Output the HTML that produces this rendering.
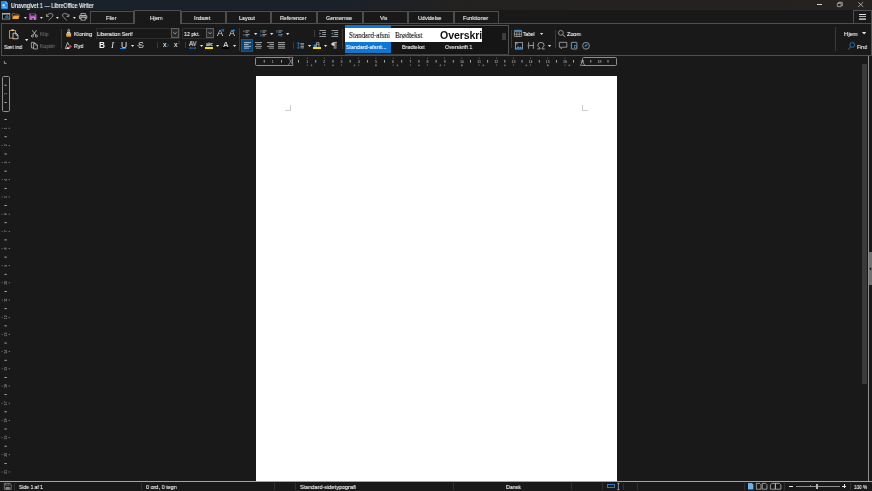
<!DOCTYPE html>
<html><head><meta charset="utf-8"><title>Unavngivet 1 — LibreOffice Writer</title>
<style>
html,body{margin:0;padding:0;width:872px;height:491px;overflow:hidden;background:#191919;}
body{position:relative;font-family:"Liberation Sans",sans-serif;}
.a{position:absolute;display:block;}
.t{white-space:nowrap;will-change:transform;}
svg{overflow:visible;}
</style></head><body>
<div class="a" style="left:0.00px;top:0.00px;width:872.00px;height:10.20px;background:linear-gradient(90deg,#19212b 0%,#1b2129 38%,#1f2125 46%,#232120 53%,#262220 100%);"></div>
<svg class="a" style="left:1.00px;top:0.90px;" width="7" height="8" viewBox="0 0 7 8"><path d="M1 0H4.6L7 2.4V7.2Q7 8 6.2 8H0.8Q0 8 0 7.2V0.8Q0 0 1 0Z" fill="#1e8fe6"/><path d="M4.6 0L7 2.4H4.6Z" fill="#8fd0ff"/><rect x="1.5" y="3.3" width="2.2" height="1.8" fill="#dff0ff"/><rect x="1.5" y="5.8" width="3.8" height="0.6" fill="#dff0ff"/></svg>
<span class="a t" style="left:10.90px;top:1.81px;font-size:6.49px;line-height:7.78px;color:#ffffff;font-family:'Liberation Sans',sans-serif;transform:scaleX(0.8415);transform-origin:0 50%;-webkit-text-stroke:0.12px #ffffff;">Unavngivet 1 — LibreOffice Writer</span>
<div class="a" style="left:816.70px;top:4.30px;width:5.10px;height:0.50px;background:#d0d0d0;"></div>
<svg class="a" style="left:836.60px;top:2.20px;" width="5.8" height="5" viewBox="0 0 5.8 5"><rect x="0.3" y="1.3" width="3.8" height="3.3" fill="none" stroke="#e8e8e8" stroke-width="0.6" rx="0.5"/><path d="M1.5 1.2V0.3H5.3V3.8H4.3" fill="none" stroke="#e8e8e8" stroke-width="0.6"/></svg>
<svg class="a" style="left:858.00px;top:2.10px;" width="5.4" height="5" viewBox="0 0 5.4 5"><path d="M0.2 0.2L5.2 4.8M5.2 0.2L0.2 4.8" stroke="#ececec" stroke-width="0.6"/></svg>
<div class="a" style="left:0.00px;top:10.20px;width:872.00px;height:481.00px;background:#191919;"></div>
<div class="a" style="left:0.60px;top:23.15px;width:871.40px;height:32.70px;border:0.8px solid #4e4e4e;box-sizing:border-box;"></div>
<div class="a" style="left:89.50px;top:11.00px;width:44.90px;height:12.90px;border:0.8px solid #4e4e4e;box-sizing:border-box;"></div>
<span class="a t" style="left:105.56px;top:15.10px;font-size:6.00px;line-height:7.19px;color:#f0f0f0;font-family:'Liberation Sans',sans-serif;transform:scaleX(0.8899);transform-origin:0 50%;-webkit-text-stroke:0.12px #f0f0f0;">Filer</span>
<div class="a" style="left:134.00px;top:10.00px;width:47.10px;height:14.10px;background:#191919;border:0.8px solid #4e4e4e;box-sizing:border-box;border-bottom:none;"></div>
<span class="a t" style="left:150.08px;top:15.10px;font-size:6.00px;line-height:7.19px;color:#f0f0f0;font-family:'Liberation Sans',sans-serif;transform:scaleX(0.8899);transform-origin:0 50%;-webkit-text-stroke:0.12px #f0f0f0;">Hjem</span>
<div class="a" style="left:180.60px;top:11.00px;width:45.20px;height:12.90px;border:0.8px solid #4e4e4e;box-sizing:border-box;"></div>
<span class="a t" style="left:193.85px;top:15.10px;font-size:6.00px;line-height:7.19px;color:#f0f0f0;font-family:'Liberation Sans',sans-serif;transform:scaleX(0.8899);transform-origin:0 50%;-webkit-text-stroke:0.12px #f0f0f0;">Indsæt</span>
<div class="a" style="left:225.80px;top:11.00px;width:45.60px;height:12.90px;border:0.8px solid #4e4e4e;box-sizing:border-box;"></div>
<span class="a t" style="left:239.39px;top:15.10px;font-size:6.00px;line-height:7.19px;color:#f0f0f0;font-family:'Liberation Sans',sans-serif;transform:scaleX(0.8899);transform-origin:0 50%;-webkit-text-stroke:0.12px #f0f0f0;">Layout</span>
<div class="a" style="left:271.40px;top:11.00px;width:45.60px;height:12.90px;border:0.8px solid #4e4e4e;box-sizing:border-box;"></div>
<span class="a t" style="left:279.80px;top:15.10px;font-size:6.00px;line-height:7.19px;color:#f0f0f0;font-family:'Liberation Sans',sans-serif;transform:scaleX(0.8899);transform-origin:0 50%;-webkit-text-stroke:0.12px #f0f0f0;">Referencer</span>
<div class="a" style="left:317.00px;top:11.00px;width:45.50px;height:12.90px;border:0.8px solid #4e4e4e;box-sizing:border-box;"></div>
<span class="a t" style="left:325.50px;top:15.10px;font-size:6.00px;line-height:7.19px;color:#f0f0f0;font-family:'Liberation Sans',sans-serif;transform:scaleX(0.8899);transform-origin:0 50%;-webkit-text-stroke:0.12px #f0f0f0;">Gennemse</span>
<div class="a" style="left:362.50px;top:11.00px;width:45.50px;height:12.90px;border:0.8px solid #4e4e4e;box-sizing:border-box;"></div>
<span class="a t" style="left:380.39px;top:15.10px;font-size:6.00px;line-height:7.19px;color:#f0f0f0;font-family:'Liberation Sans',sans-serif;transform:scaleX(0.8899);transform-origin:0 50%;-webkit-text-stroke:0.12px #f0f0f0;">Vis</span>
<div class="a" style="left:408.00px;top:11.00px;width:45.50px;height:12.90px;border:0.8px solid #4e4e4e;box-sizing:border-box;"></div>
<span class="a t" style="left:417.84px;top:15.10px;font-size:6.00px;line-height:7.19px;color:#f0f0f0;font-family:'Liberation Sans',sans-serif;transform:scaleX(0.8899);transform-origin:0 50%;-webkit-text-stroke:0.12px #f0f0f0;">Udvidelse</span>
<div class="a" style="left:453.50px;top:11.00px;width:45.70px;height:12.90px;border:0.8px solid #4e4e4e;box-sizing:border-box;"></div>
<span class="a t" style="left:462.55px;top:15.10px;font-size:6.00px;line-height:7.19px;color:#f0f0f0;font-family:'Liberation Sans',sans-serif;transform:scaleX(0.8899);transform-origin:0 50%;-webkit-text-stroke:0.12px #f0f0f0;">Funktioner</span>
<div class="a" style="left:853.20px;top:10.20px;width:18.80px;height:13.40px;border:0.8px solid #4e4e4e;box-sizing:border-box;"></div>
<div class="a" style="left:859.00px;top:14.00px;width:7.20px;height:1.00px;background:#e4e4e4;"></div>
<div class="a" style="left:859.00px;top:16.00px;width:7.20px;height:1.00px;background:#b4b4b4;"></div>
<div class="a" style="left:859.00px;top:18.00px;width:7.20px;height:1.00px;background:#8a8a8a;"></div>
<div class="a" style="left:859.00px;top:19.00px;width:7.20px;height:1.00px;background:#b0b0b0;"></div>
<svg class="a" style="left:1.90px;top:13.20px;" width="8.2" height="6.4" viewBox="0 0 8.2 6.4"><rect x="0.35" y="0.35" width="7.5" height="5.7" fill="#121518" stroke="#b4b4b4" stroke-width="0.7"/><rect x="0.35" y="0.2" width="7.5" height="1.3" fill="#b4b4b4"/><path d="M3.2 3.3H6.6V4.9H3.2Z" fill="#1f7fd0"/><path d="M4.4 1.6H5.6V3.4H4.4Z" fill="#1f7fd0"/></svg>
<svg class="a" style="left:12.40px;top:13.30px;" width="7.8" height="6.2" viewBox="0 0 7.8 6.2"><path d="M0.4 5.6V0.9Q0.4 0.4 0.9 0.4H2.6L3.4 1.3H6.2Q6.7 1.3 6.7 1.8V2.6" fill="none" stroke="#b98a45" stroke-width="0.6"/><path d="M1.5 2.5H7.6L6.5 5.9H0.4Z" fill="#f4a23c"/></svg>
<svg class="a" style="left:23.60px;top:17.05px;" width="2.8" height="1.9" viewBox="0 0 2.8 1.9"><path d="M0 0H2.8L1.4 1.9Z" fill="#e8e8e8"/></svg>
<svg class="a" style="left:29.00px;top:13.20px;" width="7.8" height="7.2" viewBox="0 0 7.8 7.2"><path d="M0.3 0.9Q0.3 0.3 0.9 0.3H6.1L7.5 1.7V6.3Q7.5 6.9 6.9 6.9H0.9Q0.3 6.9 0.3 6.3Z" fill="#b04fc0"/><rect x="1.8" y="0.5" width="4" height="2.0" fill="#241a28"/><rect x="1.5" y="4.0" width="4.8" height="2.9" fill="#cf82dc"/><rect x="2.6" y="5.0" width="2.4" height="1.9" fill="#1c2a1c" opacity="0.75"/></svg>
<svg class="a" style="left:39.90px;top:17.05px;" width="2.8" height="1.9" viewBox="0 0 2.8 1.9"><path d="M0 0H2.8L1.4 1.9Z" fill="#e8e8e8"/></svg>
<svg class="a" style="left:45.60px;top:13.00px;" width="7.4" height="7.6" viewBox="0 0 7.4 7.6"><path d="M0.6 3.2Q2.0 0.2 4.9 0.4Q7.6 0.9 6.9 3.0Q6.4 4.0 2.6 7.3" fill="none" stroke="#c4c4c4" stroke-width="0.65"/><path d="M0.5 1.0V3.5H2.9" fill="none" stroke="#c4c4c4" stroke-width="0.65"/></svg>
<svg class="a" style="left:56.10px;top:17.05px;" width="2.8" height="1.9" viewBox="0 0 2.8 1.9"><path d="M0 0H2.8L1.4 1.9Z" fill="#e8e8e8"/></svg>
<svg class="a" style="left:61.70px;top:13.00px;" width="7.4" height="7.6" viewBox="0 0 7.4 7.6"><path d="M6.8 3.2Q5.4 0.2 2.5 0.4Q-0.2 0.9 0.5 3.0Q1.0 4.0 4.8 7.3" fill="none" stroke="#c4c4c4" stroke-width="0.65"/><path d="M6.9 1.0V3.5H4.5" fill="none" stroke="#c4c4c4" stroke-width="0.65"/></svg>
<svg class="a" style="left:72.80px;top:17.05px;" width="2.8" height="1.9" viewBox="0 0 2.8 1.9"><path d="M0 0H2.8L1.4 1.9Z" fill="#e8e8e8"/></svg>
<svg class="a" style="left:78.90px;top:13.00px;" width="8.2" height="7.4" viewBox="0 0 8.2 7.4"><rect x="2.0" y="0.35" width="4.2" height="2.0" fill="none" stroke="#c8c8c8" stroke-width="0.7"/><path d="M1.9 5.6H0.8Q0.35 5.6 0.35 5.2V2.9Q0.35 2.5 0.8 2.5H7.4Q7.85 2.5 7.85 2.9V5.2Q7.85 5.6 7.4 5.6H6.3" fill="#6a6a6a" stroke="#c8c8c8" stroke-width="0.75"/><rect x="2.0" y="4.3" width="4.2" height="2.8" fill="#191919" stroke="#c8c8c8" stroke-width="0.7"/></svg>
<svg class="a" style="left:9.20px;top:29.30px;" width="9.4" height="10.2" viewBox="0 0 9.4 10.2"><path d="M0.5 1.5H6.6V9.2H0.5Z" fill="none" stroke="#d9a04a" stroke-width="0.9"/><rect x="2.4" y="0.3" width="2.4" height="1.6" fill="#c8c8c8"/><path d="M4.0 4.2H7.2L9.0 6V9.8H4.0Z" fill="#191919" stroke="#e2e2e2" stroke-width="0.8"/><path d="M7.0 4.2V6.2H9.0" fill="none" stroke="#e2e2e2" stroke-width="0.7"/></svg>
<span class="a t" style="left:3.70px;top:42.74px;font-size:6.10px;line-height:7.32px;color:#f2f2f2;font-family:'Liberation Sans',sans-serif;transform:scaleX(0.8699);transform-origin:0 50%;-webkit-text-stroke:0.12px #f2f2f2;">Sæt ind</span>
<svg class="a" style="left:25.20px;top:39.00px;" width="3.4" height="2.2" viewBox="0 0 3.4 2.2"><path d="M0 0H3.4L1.7 2.2Z" fill="#e8e8e8"/></svg>
<svg class="a" style="left:31.20px;top:29.70px;" width="6.8" height="7.4" viewBox="0 0 6.8 7.4"><path d="M1.2 0.2L4.9 5.3M5.6 0.2L1.9 5.3" stroke="#d0d0d0" stroke-width="0.75" fill="none"/><circle cx="1.4" cy="6.0" r="1.05" fill="none" stroke="#d0d0d0" stroke-width="0.7"/><circle cx="5.4" cy="6.0" r="1.05" fill="none" stroke="#d0d0d0" stroke-width="0.7"/></svg>
<span class="a t" style="left:40.00px;top:30.24px;font-size:6.10px;line-height:7.32px;color:#6b6b6b;font-family:'Liberation Sans',sans-serif;transform:scaleX(0.8351);transform-origin:0 50%;-webkit-text-stroke:0.12px #6b6b6b;">Klip</span>
<svg class="a" style="left:31.20px;top:41.50px;" width="6.8" height="7.4" viewBox="0 0 6.8 7.4"><path d="M0.4 0.4H3.4V6.0H0.4Z" fill="none" stroke="#cfcfcf" stroke-width="0.7"/><path d="M2.6 1.5H4.8L6.4 3.1V7.0H2.6Z" fill="#191919" stroke="#cfcfcf" stroke-width="0.7"/><path d="M4.7 1.5V3.2H6.4" fill="none" stroke="#cfcfcf" stroke-width="0.6"/></svg>
<span class="a t" style="left:40.00px;top:42.24px;font-size:6.10px;line-height:7.32px;color:#6b6b6b;font-family:'Liberation Sans',sans-serif;transform:scaleX(0.8501);transform-origin:0 50%;-webkit-text-stroke:0.12px #6b6b6b;">Kopiér</span>
<div class="a" style="left:61.10px;top:29.40px;width:0.70px;height:19.40px;background:#3a3a3a;"></div>
<svg class="a" style="left:65.80px;top:29.00px;" width="5.4" height="8.0" viewBox="0 0 5.4 8.0"><path d="M2.0 2.6V1.0Q2.0 0.3 2.7 0.3Q3.4 0.3 3.4 1.0V2.6" fill="none" stroke="#d8d8d8" stroke-width="0.7"/><path d="M0.8 4.6Q0.8 2.6 2.7 2.6Q4.6 2.6 4.6 4.6Z" fill="#d8d8d8"/><rect x="0.3" y="4.6" width="4.8" height="3.1" fill="#e0a040"/><rect x="0.3" y="4.6" width="4.8" height="0.8" fill="#f3d9a6"/></svg>
<span class="a t" style="left:74.00px;top:30.24px;font-size:6.10px;line-height:7.32px;color:#f2f2f2;font-family:'Liberation Sans',sans-serif;transform:scaleX(0.8987);transform-origin:0 50%;-webkit-text-stroke:0.12px #f2f2f2;">Kloning</span>
<svg class="a" style="left:65.00px;top:41.80px;" width="7.4" height="7.2" viewBox="0 0 7.4 7.2"><path d="M2.6 0.4L0.4 6.6H1.6M2.6 0.4L4.2 3.6" fill="none" stroke="#d8d8d8" stroke-width="0.75"/><path d="M3.2 5.0L5.6 3.0L7.0 4.6L4.6 6.7Z" fill="#e8423a"/><path d="M1.8 5.6L3.2 5.0L4.6 6.7L3.6 6.9H1.6Z" fill="#e8e8e8"/></svg>
<span class="a t" style="left:74.00px;top:42.24px;font-size:6.10px;line-height:7.32px;color:#f2f2f2;font-family:'Liberation Sans',sans-serif;transform:scaleX(0.8475);transform-origin:0 50%;-webkit-text-stroke:0.12px #f2f2f2;">Ryd</span>
<div class="a" style="left:96.00px;top:27.90px;width:83.60px;height:10.70px;background:#191919;border:0.8px solid #2e2e2e;box-sizing:border-box;"></div>
<span class="a t" style="left:97.40px;top:29.94px;font-size:6.10px;line-height:7.32px;color:#f2f2f2;font-family:'Liberation Sans',sans-serif;transform:scaleX(0.8671);transform-origin:0 50%;-webkit-text-stroke:0.12px #f2f2f2;">Liberation Serif</span>
<div class="a" style="left:171.00px;top:28.20px;width:8.40px;height:10.10px;background:#2a2a2a;border:0.8px solid #606060;box-sizing:border-box;"></div>
<svg class="a" style="left:173.30px;top:32.40px;" width="4" height="2.4" viewBox="0 0 4 2.4"><path d="M0.3 0.3L2 1.9L3.7 0.3" fill="none" stroke="#dcdcdc" stroke-width="0.6"/></svg>
<div class="a" style="left:181.90px;top:27.90px;width:32.30px;height:10.70px;background:#191919;border:0.8px solid #2e2e2e;box-sizing:border-box;"></div>
<span class="a t" style="left:183.50px;top:29.94px;font-size:6.10px;line-height:7.32px;color:#f2f2f2;font-family:'Liberation Sans',sans-serif;transform:scaleX(0.8568);transform-origin:0 50%;-webkit-text-stroke:0.12px #f2f2f2;">12 pkt.</span>
<div class="a" style="left:205.80px;top:28.20px;width:8.20px;height:10.10px;background:#2a2a2a;border:0.8px solid #606060;box-sizing:border-box;"></div>
<svg class="a" style="left:208.00px;top:32.40px;" width="4" height="2.4" viewBox="0 0 4 2.4"><path d="M0.3 0.3L2 1.9L3.7 0.3" fill="none" stroke="#dcdcdc" stroke-width="0.6"/></svg>
<span class="a t" style="left:216.80px;top:27.64px;font-size:9.27px;line-height:11.12px;color:#d6d6d6;font-family:'Liberation Sans',sans-serif;">A</span>
<svg class="a" style="left:221.30px;top:29.40px;" width="2.6" height="2.6" viewBox="0 0 2.6 2.6"><path d="M0.2 0.6H2.6V2.8M2.6 0.6L0.6 2.6" fill="none" stroke="#2b8fe0" stroke-width="0.7"/></svg>
<span class="a t" style="left:228.50px;top:28.20px;font-size:8.83px;line-height:10.59px;color:#d6d6d6;font-family:'Liberation Sans',sans-serif;">A</span>
<svg class="a" style="left:232.30px;top:29.00px;" width="3.2" height="3.2" viewBox="0 0 3.2 3.2"><path d="M1.6 0V3.2M0 1.6H3.2" stroke="#2b8fe0" stroke-width="0.8"/></svg>
<span class="a t" style="left:99.00px;top:40.53px;font-size:8.28px;line-height:9.94px;color:#f4f4f4;font-family:'Liberation Sans',sans-serif;font-weight:bold;">B</span>
<span class="a t" style="left:111.30px;top:40.48px;font-size:9.20px;line-height:11.04px;color:#e0e0e0;font-family:'Liberation Serif',serif;font-style:italic;">I</span>
<span class="a t" style="left:120.90px;top:40.10px;font-size:8.50px;line-height:10.20px;color:#e4e4e4;font-family:'Liberation Sans',sans-serif;">U</span>
<div class="a" style="left:120.40px;top:48.30px;width:5.80px;height:0.65px;background:#2380d0;"></div>
<svg class="a" style="left:130.50px;top:45.25px;" width="3.2" height="2.1" viewBox="0 0 3.2 2.1"><path d="M0 0H3.2L1.6 2.1Z" fill="#e8e8e8"/></svg>
<span class="a t" style="left:138.40px;top:40.17px;font-size:8.72px;line-height:10.46px;color:#d8d8d8;font-family:'Liberation Sans',sans-serif;">S</span>
<div class="a" style="left:137.40px;top:45.30px;width:7.00px;height:0.55px;background:#2380d0;"></div>
<div class="a" style="left:157.40px;top:41.90px;width:0.70px;height:6.60px;background:#3a3a3a;"></div>
<span class="a t" style="left:163.00px;top:41.41px;font-size:6.98px;line-height:8.37px;color:#e6e6e6;font-family:'Liberation Sans',sans-serif;-webkit-text-stroke:0.1px #e6e6e6;">x</span>
<span class="a t" style="left:166.90px;top:45.48px;font-size:3.20px;line-height:3.84px;color:#2b8fe0;font-family:'Liberation Sans',sans-serif;">2</span>
<span class="a t" style="left:174.40px;top:41.41px;font-size:6.98px;line-height:8.37px;color:#e6e6e6;font-family:'Liberation Sans',sans-serif;-webkit-text-stroke:0.1px #e6e6e6;">x</span>
<span class="a t" style="left:178.40px;top:41.68px;font-size:3.20px;line-height:3.84px;color:#2b8fe0;font-family:'Liberation Sans',sans-serif;">2</span>
<div class="a" style="left:184.90px;top:41.90px;width:0.70px;height:6.60px;background:#3a3a3a;"></div>
<span class="a t" style="left:188.80px;top:40.41px;font-size:6.32px;line-height:7.59px;color:#e6e6e6;font-family:'Liberation Sans',sans-serif;transform:scaleX(0.9291);transform-origin:0 50%;-webkit-text-stroke:0.12px #e6e6e6;">AV</span>
<svg class="a" style="left:188.80px;top:46.60px;" width="7.4" height="2.2" viewBox="0 0 7.4 2.2"><path d="M0.8 1.1H6.6M1.6 0.2L0.5 1.1L1.6 2.0M5.8 0.2L6.9 1.1L5.8 2.0" fill="none" stroke="#2b8fe0" stroke-width="0.7"/></svg>
<svg class="a" style="left:199.60px;top:45.25px;" width="3.2" height="2.1" viewBox="0 0 3.2 2.1"><path d="M0 0H3.2L1.6 2.1Z" fill="#e8e8e8"/></svg>
<span class="a t" style="left:205.60px;top:40.99px;font-size:5.01px;line-height:6.02px;color:#c8c8c8;font-family:'Liberation Sans',sans-serif;transform:scaleX(0.8412);transform-origin:0 50%;-webkit-text-stroke:0.12px #c8c8c8;">abc</span>
<svg class="a" style="left:206.00px;top:43.20px;" width="7" height="3" viewBox="0 0 7 3"><path d="M0.5 2.8L6.2 0.6" stroke="#d8d8d8" stroke-width="0.6"/></svg>
<div class="a" style="left:205.10px;top:47.00px;width:7.70px;height:2.00px;background:#f2e600;"></div>
<svg class="a" style="left:216.10px;top:45.25px;" width="3.2" height="2.1" viewBox="0 0 3.2 2.1"><path d="M0 0H3.2L1.6 2.1Z" fill="#e8e8e8"/></svg>
<span class="a t" style="left:222.60px;top:39.56px;font-size:8.40px;line-height:10.08px;color:#f0f0f0;font-family:'Liberation Sans',sans-serif;-webkit-text-stroke:0.12px #f0f0f0;">A</span>
<div class="a" style="left:222.20px;top:47.20px;width:6.60px;height:1.80px;background:#000000;"></div>
<svg class="a" style="left:232.50px;top:45.25px;" width="3.2" height="2.1" viewBox="0 0 3.2 2.1"><path d="M0 0H3.2L1.6 2.1Z" fill="#e8e8e8"/></svg>
<div class="a" style="left:239.20px;top:27.50px;width:0.70px;height:23.90px;background:#3a3a3a;"></div>
<svg class="a" style="left:243.20px;top:29.60px;" width="6.8" height="6.8" viewBox="0 0 6.8 6.8"><rect x="0.2" y="0.6" width="1.3" height="1.3" fill="#2b8fe0"/><rect x="0.2" y="4.3" width="1.3" height="1.3" fill="#2b8fe0"/><path d="M2.4 0.8H6.6M2.4 2.2H5.2M2.4 4.5H6.6M2.4 5.9H5.2" stroke="#c2c2c2" stroke-width="0.7"/></svg>
<svg class="a" style="left:253.60px;top:33.05px;" width="3.4" height="2.1" viewBox="0 0 3.4 2.1"><path d="M0 0H3.4L1.7 2.1Z" fill="#e8e8e8"/></svg>
<svg class="a" style="left:259.70px;top:29.60px;" width="6.8" height="6.8" viewBox="0 0 6.8 6.8"><path d="M0.9 0.2V2.6M0.9 3.9V6.6" stroke="#2b8fe0" stroke-width="0.8"/><path d="M2.4 0.8H6.6M2.4 2.2H5.2M2.4 4.5H6.6M2.4 5.9H5.2" stroke="#c2c2c2" stroke-width="0.7"/></svg>
<svg class="a" style="left:270.10px;top:33.05px;" width="3.4" height="2.1" viewBox="0 0 3.4 2.1"><path d="M0 0H3.4L1.7 2.1Z" fill="#e8e8e8"/></svg>
<svg class="a" style="left:276.30px;top:29.60px;" width="6.8" height="6.8" viewBox="0 0 6.8 6.8"><path d="M0.2 0.8H1.6M0.9 0.8V2.8M2.4 4.6L3.0 5.8L3.6 4.6Z" stroke="#2b8fe0" stroke-width="0.7" fill="#2b8fe0"/><path d="M2.4 0.8H6.6M2.4 2.2H5.2M4.4 4.5H6.6M4.4 5.9H5.8" stroke="#c2c2c2" stroke-width="0.7"/></svg>
<svg class="a" style="left:286.30px;top:33.05px;" width="3.4" height="2.1" viewBox="0 0 3.4 2.1"><path d="M0 0H3.4L1.7 2.1Z" fill="#e8e8e8"/></svg>
<div class="a" style="left:241.10px;top:39.00px;width:12.30px;height:13.10px;background:#0c4474;border:0.8px solid #10568f;box-sizing:border-box;"></div>
<svg class="a" style="left:244.00px;top:42.10px;" width="7" height="7" viewBox="0 0 7 7"><path d="M0 0.6H7" stroke="#d4dde6" stroke-width="0.8"/><path d="M0 2.4H4.6" stroke="#d4dde6" stroke-width="0.8"/><path d="M0 4.3H7" stroke="#d4dde6" stroke-width="0.8"/><path d="M0 6.1H5.2" stroke="#d4dde6" stroke-width="0.8"/></svg>
<svg class="a" style="left:255.30px;top:42.10px;" width="7" height="7" viewBox="0 0 7 7"><path d="M0 0.6H7" stroke="#c4c4c4" stroke-width="0.8"/><path d="M1.2 2.4H5.8" stroke="#c4c4c4" stroke-width="0.8"/><path d="M0 4.3H7" stroke="#c4c4c4" stroke-width="0.8"/><path d="M0.8 6.1H6.2" stroke="#c4c4c4" stroke-width="0.8"/></svg>
<svg class="a" style="left:266.80px;top:42.10px;" width="7" height="7" viewBox="0 0 7 7"><path d="M0 0.6H7" stroke="#c4c4c4" stroke-width="0.8"/><path d="M2.4 2.4H7" stroke="#c4c4c4" stroke-width="0.8"/><path d="M0 4.3H7" stroke="#c4c4c4" stroke-width="0.8"/><path d="M1.8 6.1H7" stroke="#c4c4c4" stroke-width="0.8"/></svg>
<svg class="a" style="left:278.00px;top:42.10px;" width="7" height="7" viewBox="0 0 7 7"><path d="M0 0.6H7" stroke="#c4c4c4" stroke-width="0.8"/><path d="M0 2.4H7" stroke="#c4c4c4" stroke-width="0.8"/><path d="M0 4.3H7" stroke="#c4c4c4" stroke-width="0.8"/><path d="M0 6.1H7" stroke="#c4c4c4" stroke-width="0.8"/></svg>
<div class="a" style="left:293.10px;top:41.90px;width:0.70px;height:6.90px;background:#3a3a3a;"></div>
<svg class="a" style="left:297.00px;top:41.90px;" width="7.2" height="7.0" viewBox="0 0 7.2 7.0"><path d="M1.3 0.4V6.6M0.2 1.6L1.3 0.4L2.4 1.6M0.2 5.4L1.3 6.6L2.4 5.4" fill="none" stroke="#2b8fe0" stroke-width="0.7"/><path d="M3.4 1.6H7M3.4 2.9H7M3.4 4.6H7M3.4 5.9H7" stroke="#c2c2c2" stroke-width="0.7"/></svg>
<svg class="a" style="left:307.70px;top:45.25px;" width="3.2" height="2.1" viewBox="0 0 3.2 2.1"><path d="M0 0H3.2L1.6 2.1Z" fill="#e8e8e8"/></svg>
<svg class="a" style="left:313.20px;top:41.60px;" width="7.8" height="5.4" viewBox="0 0 7.8 5.4"><path d="M0.6 2.6H3.2V5.2H0.6Z" fill="#2b8fe0"/><path d="M3.4 5.2V0.6H6.0V5.2M3.4 2.4H6.0" fill="none" stroke="#c2c2c2" stroke-width="0.7"/></svg>
<div class="a" style="left:313.30px;top:47.00px;width:7.70px;height:2.00px;background:#f2e600;"></div>
<svg class="a" style="left:324.30px;top:45.25px;" width="3.2" height="2.1" viewBox="0 0 3.2 2.1"><path d="M0 0H3.2L1.6 2.1Z" fill="#e8e8e8"/></svg>
<svg class="a" style="left:331.20px;top:41.90px;" width="6.0" height="7.0" viewBox="0 0 6.0 7.0"><path d="M3.3 0.4V6.8M4.9 0.4V6.8M2.6 0.4H5.9" fill="none" stroke="#d8d8d8" stroke-width="0.7"/><path d="M3.3 0.2Q0.3 0.2 0.3 2.0Q0.3 3.8 3.3 3.8Z" fill="#dadada"/></svg>
<div class="a" style="left:314.30px;top:29.70px;width:0.70px;height:7.00px;background:#3a3a3a;"></div>
<svg class="a" style="left:319.40px;top:29.70px;" width="7.2" height="7.0" viewBox="0 0 7.2 7.0"><path d="M0.4 0.5H7M3.2 2.5H7M3.2 4.5H7M0.4 6.5H7" stroke="#c2c2c2" stroke-width="0.75"/><path d="M0.3 2.2L2.2 3.5L0.3 4.8Z" fill="#2b8fe0"/></svg>
<svg class="a" style="left:330.80px;top:29.70px;" width="7.4" height="7.0" viewBox="0 0 7.4 7.0"><path d="M0.4 0.5H7.2M3.2 2.5H7.2M3.2 4.5H7.2M0.4 6.5H7.2" stroke="#c2c2c2" stroke-width="0.75"/><path d="M2.2 2.2L0.3 3.5L2.2 4.8Z" fill="#2b8fe0"/></svg>
<div class="a" style="left:342.10px;top:29.40px;width:0.70px;height:19.40px;background:#3a3a3a;"></div>
<div class="a" style="left:345.00px;top:25.00px;width:163.60px;height:29.60px;background:#151515;"></div>
<div class="a" style="left:345.00px;top:25.00px;width:163.60px;height:0.70px;background:#505050;"></div>
<div class="a" style="left:508.20px;top:25.00px;width:0.80px;height:30.00px;background:#505050;"></div>
<div class="a" style="left:345.00px;top:54.00px;width:163.60px;height:1.00px;background:#3e3e3e;"></div>
<div class="a" style="left:345.00px;top:25.00px;width:45.90px;height:28.30px;background:#0a78d4;"></div>
<div class="a" style="left:345.00px;top:28.10px;width:136.80px;height:13.80px;background:#ffffff;"></div>
<span class="a t" style="left:349.40px;top:30.83px;font-size:7.96px;line-height:9.55px;color:#111;font-family:'Liberation Serif',serif;transform:scaleX(0.8793);transform-origin:0 50%;-webkit-text-stroke:0.12px #111;">Standard-afsni</span>
<span class="a t" style="left:394.60px;top:30.83px;font-size:7.96px;line-height:9.55px;color:#111;font-family:'Liberation Serif',serif;transform:scaleX(0.8855);transform-origin:0 50%;-webkit-text-stroke:0.12px #111;">Brødtekst</span>
<div class="a" style="left:436.8px;top:28.1px;width:44.9px;height:13.8px;overflow:hidden;"><span class="t" style="position:absolute;left:3.0px;top:1.2px;font-size:10.6px;line-height:13px;font-weight:bold;color:#111;font-family:'Liberation Sans',sans-serif;letter-spacing:-0.1px;">Overskrift 1</span></div>
<span class="a t" style="left:345.70px;top:44.37px;font-size:5.89px;line-height:7.06px;color:#ffffff;font-family:'Liberation Sans',sans-serif;transform:scaleX(0.9080);transform-origin:0 50%;-webkit-text-stroke:0.12px #ffffff;">Standard-afsnit...</span>
<span class="a t" style="left:402.20px;top:44.37px;font-size:5.89px;line-height:7.06px;color:#f0f0f0;font-family:'Liberation Sans',sans-serif;transform:scaleX(0.8974);transform-origin:0 50%;-webkit-text-stroke:0.12px #f0f0f0;">Brødtekst</span>
<span class="a t" style="left:445.00px;top:44.37px;font-size:5.89px;line-height:7.06px;color:#f0f0f0;font-family:'Liberation Sans',sans-serif;transform:scaleX(0.9107);transform-origin:0 50%;-webkit-text-stroke:0.12px #f0f0f0;">Overskrift 1</span>
<div class="a" style="left:501.60px;top:33.00px;width:4.40px;height:7.30px;background:#3d3d3d;"></div>
<div class="a" style="left:511.20px;top:29.70px;width:0.70px;height:18.70px;background:#3a3a3a;"></div>
<svg class="a" style="left:514.00px;top:29.60px;" width="8.0" height="7.0" viewBox="0 0 8.0 7.0"><rect x="0.35" y="0.35" width="7.3" height="6.2" fill="none" stroke="#c2c2c2" stroke-width="0.7" rx="0.6"/><rect x="0.35" y="0.35" width="7.3" height="1.6" fill="#2b8fe0"/><path d="M0.4 4.2H7.6M2.8 2V6.5M5.2 2V6.5" stroke="#c2c2c2" stroke-width="0.6"/></svg>
<span class="a t" style="left:523.40px;top:30.04px;font-size:6.10px;line-height:7.32px;color:#f2f2f2;font-family:'Liberation Sans',sans-serif;transform:scaleX(0.7949);transform-origin:0 50%;-webkit-text-stroke:0.12px #f2f2f2;">Tabel</span>
<svg class="a" style="left:540.00px;top:33.05px;" width="3.2" height="2.1" viewBox="0 0 3.2 2.1"><path d="M0 0H3.2L1.6 2.1Z" fill="#e8e8e8"/></svg>
<svg class="a" style="left:515.20px;top:41.60px;" width="7.8" height="7.4" viewBox="0 0 7.8 7.4"><rect x="0.35" y="0.35" width="7.1" height="6.7" fill="none" stroke="#c2c2c2" stroke-width="0.7"/><path d="M0.7 6.7L3.0 4.0L4.4 5.4L5.6 4.4L7.1 5.8V6.7Z" fill="#2b8fe0"/><rect x="1.3" y="1.2" width="1.2" height="1.2" fill="#f2a03a"/></svg>
<svg class="a" style="left:526.70px;top:41.80px;" width="7.8" height="7.0" viewBox="0 0 7.8 7.0"><path d="M1.6 0.2V6.8M6.4 0.2V6.8M1.6 3.5H6.4" fill="none" stroke="#c2c2c2" stroke-width="0.75"/><path d="M0 3.5H3.2" stroke="#e8423a" stroke-width="0.7" stroke-dasharray="0.8 0.5"/></svg>
<svg class="a" style="left:536.90px;top:41.70px;" width="8.0" height="7.4" viewBox="0 0 8.0 7.4"><path d="M0.3 6.9H3.0V6.1Q0.9 5.0 0.9 3.2Q0.9 0.4 4.0 0.4Q7.1 0.4 7.1 3.2Q7.1 5.0 5.0 6.1V6.9H7.7" fill="none" stroke="#cccccc" stroke-width="0.7"/></svg>
<svg class="a" style="left:548.30px;top:45.25px;" width="3.2" height="2.1" viewBox="0 0 3.2 2.1"><path d="M0 0H3.2L1.6 2.1Z" fill="#e8e8e8"/></svg>
<div class="a" style="left:554.50px;top:29.70px;width:0.70px;height:18.70px;background:#3a3a3a;"></div>
<svg class="a" style="left:558.10px;top:29.70px;" width="7.8" height="7.4" viewBox="0 0 7.8 7.4"><circle cx="2.9" cy="2.9" r="2.4" fill="none" stroke="#c2c2c2" stroke-width="0.7"/><path d="M4.7 4.7L7.4 7.0" stroke="#c2c2c2" stroke-width="0.8"/></svg>
<span class="a t" style="left:567.30px;top:30.04px;font-size:6.10px;line-height:7.32px;color:#f2f2f2;font-family:'Liberation Sans',sans-serif;transform:scaleX(0.8909);transform-origin:0 50%;-webkit-text-stroke:0.12px #f2f2f2;">Zoom</span>
<svg class="a" style="left:558.90px;top:41.80px;" width="8.2" height="7.4" viewBox="0 0 8.2 7.4"><path d="M0.35 0.35H7.85V5.2H3.6L2.2 6.8V5.2H0.35Z" fill="none" stroke="#c2c2c2" stroke-width="0.7"/></svg>
<svg class="a" style="left:571.30px;top:41.70px;" width="6.8" height="7.4" viewBox="0 0 6.8 7.4"><path d="M0.35 0.8Q0.35 0.35 0.8 0.35H5.4Q5.9 0.35 5.9 0.8V6.6Q5.9 7.05 5.4 7.05H0.8Q0.35 7.05 0.35 6.6Z" fill="none" stroke="#c2c2c2" stroke-width="0.7"/><rect x="3.6" y="3.6" width="1.9" height="2.4" fill="none" stroke="#2b8fe0" stroke-width="0.7"/></svg>
<svg class="a" style="left:581.80px;top:41.70px;" width="8.2" height="7.6" viewBox="0 0 8.2 7.6"><circle cx="4.0" cy="3.8" r="3.4" fill="none" stroke="#c2c2c2" stroke-width="0.7"/><path d="M2.2 4.6L4.0 2.6H6.0L4.2 4.6Z" fill="#2b8fe0"/></svg>
<div class="a" style="left:835.10px;top:27.20px;width:0.70px;height:24.20px;background:#3a3a3a;"></div>
<span class="a t" style="left:843.50px;top:29.94px;font-size:6.10px;line-height:7.32px;color:#f2f2f2;font-family:'Liberation Sans',sans-serif;transform:scaleX(0.9618);transform-origin:0 50%;-webkit-text-stroke:0.12px #f2f2f2;">Hjem</span>
<svg class="a" style="left:862.00px;top:32.00px;" width="4.2" height="2.4" viewBox="0 0 4.2 2.4"><path d="M0 0H4.2L2.1 2.4Z" fill="#e8e8e8"/></svg>
<svg class="a" style="left:848.00px;top:42.30px;" width="7.2" height="8.0" viewBox="0 0 7.2 8.0"><circle cx="4.3" cy="2.9" r="2.4" fill="none" stroke="#2b8fe0" stroke-width="0.7"/><path d="M2.6 4.7L0.3 7.6" stroke="#2b8fe0" stroke-width="0.8"/></svg>
<span class="a t" style="left:856.90px;top:43.24px;font-size:6.10px;line-height:7.32px;color:#f2f2f2;font-family:'Liberation Sans',sans-serif;transform:scaleX(0.8422);transform-origin:0 50%;-webkit-text-stroke:0.12px #f2f2f2;">Find</span>
<div class="a" style="left:255.30px;top:57.20px;width:37.60px;height:8.80px;border:0.7px solid #8e8e8e;box-sizing:border-box;border-radius:1.6px;"></div>
<div class="a" style="left:582.00px;top:57.20px;width:34.50px;height:8.80px;border:0.7px solid #8e8e8e;box-sizing:border-box;border-radius:1.6px;"></div>
<svg class="a" style="left:0;top:0;" width="872" height="70" viewBox="0 0 872 70"><rect x="263.80" y="60.0" width="0.8" height="2.6" fill="#c6c6c6"/><text x="272.79" y="62.7" font-size="3.6" text-anchor="middle" fill="#c4c4c4" font-family="Liberation Sans, sans-serif">1</text><rect x="280.99" y="60.0" width="0.8" height="2.6" fill="#c6c6c6"/><rect x="298.18" y="60.0" width="0.8" height="2.6" fill="#c6c6c6"/><text x="307.17" y="62.7" font-size="3.6" text-anchor="middle" fill="#c4c4c4" font-family="Liberation Sans, sans-serif">1</text><rect x="306.87" y="57.6" width="0.6" height="1.0" fill="#a8a8a8"/><rect x="306.87" y="64.5" width="0.6" height="1.2" fill="#a8a8a8"/><rect x="315.37" y="60.0" width="0.8" height="2.6" fill="#c6c6c6"/><text x="324.36" y="62.7" font-size="3.6" text-anchor="middle" fill="#c4c4c4" font-family="Liberation Sans, sans-serif">2</text><rect x="324.06" y="57.6" width="0.6" height="1.0" fill="#a8a8a8"/><rect x="324.06" y="64.5" width="0.6" height="1.2" fill="#a8a8a8"/><rect x="332.56" y="60.0" width="0.8" height="2.6" fill="#c6c6c6"/><text x="341.55" y="62.7" font-size="3.6" text-anchor="middle" fill="#c4c4c4" font-family="Liberation Sans, sans-serif">3</text><rect x="341.25" y="57.6" width="0.6" height="1.0" fill="#a8a8a8"/><rect x="341.25" y="64.5" width="0.6" height="1.2" fill="#a8a8a8"/><rect x="349.75" y="60.0" width="0.8" height="2.6" fill="#c6c6c6"/><text x="358.74" y="62.7" font-size="3.6" text-anchor="middle" fill="#c4c4c4" font-family="Liberation Sans, sans-serif">4</text><rect x="358.44" y="57.6" width="0.6" height="1.0" fill="#a8a8a8"/><rect x="358.44" y="64.5" width="0.6" height="1.2" fill="#a8a8a8"/><rect x="366.94" y="60.0" width="0.8" height="2.6" fill="#c6c6c6"/><text x="375.93" y="62.7" font-size="3.6" text-anchor="middle" fill="#c4c4c4" font-family="Liberation Sans, sans-serif">5</text><rect x="375.63" y="57.6" width="0.6" height="1.0" fill="#a8a8a8"/><rect x="375.63" y="64.5" width="0.6" height="1.2" fill="#a8a8a8"/><rect x="384.13" y="60.0" width="0.8" height="2.6" fill="#c6c6c6"/><text x="393.12" y="62.7" font-size="3.6" text-anchor="middle" fill="#c4c4c4" font-family="Liberation Sans, sans-serif">6</text><rect x="392.82" y="57.6" width="0.6" height="1.0" fill="#a8a8a8"/><rect x="392.82" y="64.5" width="0.6" height="1.2" fill="#a8a8a8"/><rect x="401.32" y="60.0" width="0.8" height="2.6" fill="#c6c6c6"/><text x="410.31" y="62.7" font-size="3.6" text-anchor="middle" fill="#c4c4c4" font-family="Liberation Sans, sans-serif">7</text><rect x="410.01" y="57.6" width="0.6" height="1.0" fill="#a8a8a8"/><rect x="410.01" y="64.5" width="0.6" height="1.2" fill="#a8a8a8"/><rect x="418.51" y="60.0" width="0.8" height="2.6" fill="#c6c6c6"/><text x="427.50" y="62.7" font-size="3.6" text-anchor="middle" fill="#c4c4c4" font-family="Liberation Sans, sans-serif">8</text><rect x="427.20" y="57.6" width="0.6" height="1.0" fill="#a8a8a8"/><rect x="427.20" y="64.5" width="0.6" height="1.2" fill="#a8a8a8"/><rect x="435.70" y="60.0" width="0.8" height="2.6" fill="#c6c6c6"/><text x="444.69" y="62.7" font-size="3.6" text-anchor="middle" fill="#c4c4c4" font-family="Liberation Sans, sans-serif">9</text><rect x="444.39" y="57.6" width="0.6" height="1.0" fill="#a8a8a8"/><rect x="444.39" y="64.5" width="0.6" height="1.2" fill="#a8a8a8"/><rect x="452.89" y="60.0" width="0.8" height="2.6" fill="#c6c6c6"/><text x="461.88" y="62.7" font-size="3.6" text-anchor="middle" fill="#c4c4c4" font-family="Liberation Sans, sans-serif">10</text><rect x="461.58" y="57.6" width="0.6" height="1.0" fill="#a8a8a8"/><rect x="461.58" y="64.5" width="0.6" height="1.2" fill="#a8a8a8"/><rect x="470.08" y="60.0" width="0.8" height="2.6" fill="#c6c6c6"/><text x="479.07" y="62.7" font-size="3.6" text-anchor="middle" fill="#c4c4c4" font-family="Liberation Sans, sans-serif">11</text><rect x="478.77" y="57.6" width="0.6" height="1.0" fill="#a8a8a8"/><rect x="478.77" y="64.5" width="0.6" height="1.2" fill="#a8a8a8"/><rect x="487.27" y="60.0" width="0.8" height="2.6" fill="#c6c6c6"/><text x="496.26" y="62.7" font-size="3.6" text-anchor="middle" fill="#c4c4c4" font-family="Liberation Sans, sans-serif">12</text><rect x="495.96" y="57.6" width="0.6" height="1.0" fill="#a8a8a8"/><rect x="495.96" y="64.5" width="0.6" height="1.2" fill="#a8a8a8"/><rect x="504.46" y="60.0" width="0.8" height="2.6" fill="#c6c6c6"/><text x="513.45" y="62.7" font-size="3.6" text-anchor="middle" fill="#c4c4c4" font-family="Liberation Sans, sans-serif">13</text><rect x="513.15" y="57.6" width="0.6" height="1.0" fill="#a8a8a8"/><rect x="513.15" y="64.5" width="0.6" height="1.2" fill="#a8a8a8"/><rect x="521.65" y="60.0" width="0.8" height="2.6" fill="#c6c6c6"/><text x="530.64" y="62.7" font-size="3.6" text-anchor="middle" fill="#c4c4c4" font-family="Liberation Sans, sans-serif">14</text><rect x="530.34" y="57.6" width="0.6" height="1.0" fill="#a8a8a8"/><rect x="530.34" y="64.5" width="0.6" height="1.2" fill="#a8a8a8"/><rect x="538.84" y="60.0" width="0.8" height="2.6" fill="#c6c6c6"/><text x="547.83" y="62.7" font-size="3.6" text-anchor="middle" fill="#c4c4c4" font-family="Liberation Sans, sans-serif">15</text><rect x="547.53" y="57.6" width="0.6" height="1.0" fill="#a8a8a8"/><rect x="547.53" y="64.5" width="0.6" height="1.2" fill="#a8a8a8"/><rect x="556.02" y="60.0" width="0.8" height="2.6" fill="#c6c6c6"/><text x="565.02" y="62.7" font-size="3.6" text-anchor="middle" fill="#c4c4c4" font-family="Liberation Sans, sans-serif">16</text><rect x="564.72" y="57.6" width="0.6" height="1.0" fill="#a8a8a8"/><rect x="564.72" y="64.5" width="0.6" height="1.2" fill="#a8a8a8"/><rect x="573.22" y="60.0" width="0.8" height="2.6" fill="#c6c6c6"/><text x="582.21" y="62.7" font-size="3.6" text-anchor="middle" fill="#c4c4c4" font-family="Liberation Sans, sans-serif">17</text><rect x="590.41" y="60.0" width="0.8" height="2.6" fill="#c6c6c6"/><text x="599.40" y="62.7" font-size="3.6" text-anchor="middle" fill="#c4c4c4" font-family="Liberation Sans, sans-serif">18</text><rect x="607.60" y="60.0" width="0.8" height="2.6" fill="#c6c6c6"/><path d="M310.57 65.7H312.37M311.47 65.7V64.3" stroke="#a8a8a8" stroke-width="0.5" fill="none"/><path d="M332.06 65.7H333.86M332.96 65.7V64.3" stroke="#a8a8a8" stroke-width="0.5" fill="none"/><path d="M353.54 65.7H355.34M354.44 65.7V64.3" stroke="#a8a8a8" stroke-width="0.5" fill="none"/><path d="M375.03 65.7H376.83M375.93 65.7V64.3" stroke="#a8a8a8" stroke-width="0.5" fill="none"/><path d="M396.52 65.7H398.32M397.42 65.7V64.3" stroke="#a8a8a8" stroke-width="0.5" fill="none"/><path d="M418.01 65.7H419.81M418.91 65.7V64.3" stroke="#a8a8a8" stroke-width="0.5" fill="none"/><path d="M439.49 65.7H441.29M440.39 65.7V64.3" stroke="#a8a8a8" stroke-width="0.5" fill="none"/><path d="M460.98 65.7H462.78M461.88 65.7V64.3" stroke="#a8a8a8" stroke-width="0.5" fill="none"/><path d="M482.47 65.7H484.27M483.37 65.7V64.3" stroke="#a8a8a8" stroke-width="0.5" fill="none"/><path d="M503.96 65.7H505.75M504.86 65.7V64.3" stroke="#a8a8a8" stroke-width="0.5" fill="none"/><path d="M525.44 65.7H527.24M526.34 65.7V64.3" stroke="#a8a8a8" stroke-width="0.5" fill="none"/><path d="M546.93 65.7H548.73M547.83 65.7V64.3" stroke="#a8a8a8" stroke-width="0.5" fill="none"/><path d="M568.42 65.7H570.22M569.32 65.7V64.3" stroke="#a8a8a8" stroke-width="0.5" fill="none"/></svg>
<svg class="a" style="left:287.70px;top:57.20px;" width="5.4" height="8.8" viewBox="0 0 5.4 8.8"><path d="M0.2 0.3H5.2L0.2 8.5H5.2Z" fill="#191919" stroke="#bcbcbc" stroke-width="0.55"/></svg>
<svg class="a" style="left:579.90px;top:61.30px;" width="5.0" height="4.8" viewBox="0 0 5.0 4.8"><path d="M2.5 0.4L4.7 4.4H0.3Z" fill="#191919" stroke="#d0d0d0" stroke-width="0.6"/></svg>
<svg class="a" style="left:4.20px;top:60.60px;" width="2.6" height="2.8" viewBox="0 0 2.6 2.8"><path d="M0.4 0V2.4H2.6" fill="none" stroke="#c8c8c8" stroke-width="0.7"/></svg>
<div class="a" style="left:2.00px;top:76.00px;width:7.80px;height:36.00px;border:0.7px solid #8e8e8e;box-sizing:border-box;border-radius:1.6px;"></div>
<svg class="a" style="left:0;top:0;" width="12" height="481" viewBox="0 0 12 481"><rect x="4.4" y="84.79" width="2.4" height="0.8" fill="#c6c6c6"/><text transform="translate(6.9 93.79) rotate(-90)" font-size="3.6" text-anchor="middle" fill="#b8b8b8" font-family="Liberation Sans, sans-serif">1</text><rect x="4.4" y="101.98" width="2.4" height="0.8" fill="#c6c6c6"/><rect x="4.4" y="119.17" width="2.4" height="0.8" fill="#c6c6c6"/><text transform="translate(6.9 128.17) rotate(-90)" font-size="3.6" text-anchor="middle" fill="#b8b8b8" font-family="Liberation Sans, sans-serif">1</text><rect x="1.6" y="127.87" width="1.0" height="0.6" fill="#a0a0a0"/><rect x="8.6" y="127.87" width="1.4" height="0.6" fill="#a0a0a0"/><rect x="4.4" y="136.37" width="2.4" height="0.8" fill="#c6c6c6"/><text transform="translate(6.9 145.36) rotate(-90)" font-size="3.6" text-anchor="middle" fill="#b8b8b8" font-family="Liberation Sans, sans-serif">2</text><rect x="1.6" y="145.06" width="1.0" height="0.6" fill="#a0a0a0"/><rect x="8.6" y="145.06" width="1.4" height="0.6" fill="#a0a0a0"/><rect x="4.4" y="153.56" width="2.4" height="0.8" fill="#c6c6c6"/><text transform="translate(6.9 162.55) rotate(-90)" font-size="3.6" text-anchor="middle" fill="#b8b8b8" font-family="Liberation Sans, sans-serif">3</text><rect x="1.6" y="162.25" width="1.0" height="0.6" fill="#a0a0a0"/><rect x="8.6" y="162.25" width="1.4" height="0.6" fill="#a0a0a0"/><rect x="4.4" y="170.75" width="2.4" height="0.8" fill="#c6c6c6"/><text transform="translate(6.9 179.74) rotate(-90)" font-size="3.6" text-anchor="middle" fill="#b8b8b8" font-family="Liberation Sans, sans-serif">4</text><rect x="1.6" y="179.44" width="1.0" height="0.6" fill="#a0a0a0"/><rect x="8.6" y="179.44" width="1.4" height="0.6" fill="#a0a0a0"/><rect x="4.4" y="187.94" width="2.4" height="0.8" fill="#c6c6c6"/><text transform="translate(6.9 196.93) rotate(-90)" font-size="3.6" text-anchor="middle" fill="#b8b8b8" font-family="Liberation Sans, sans-serif">5</text><rect x="1.6" y="196.63" width="1.0" height="0.6" fill="#a0a0a0"/><rect x="8.6" y="196.63" width="1.4" height="0.6" fill="#a0a0a0"/><rect x="4.4" y="205.12" width="2.4" height="0.8" fill="#c6c6c6"/><text transform="translate(6.9 214.12) rotate(-90)" font-size="3.6" text-anchor="middle" fill="#b8b8b8" font-family="Liberation Sans, sans-serif">6</text><rect x="1.6" y="213.82" width="1.0" height="0.6" fill="#a0a0a0"/><rect x="8.6" y="213.82" width="1.4" height="0.6" fill="#a0a0a0"/><rect x="4.4" y="222.32" width="2.4" height="0.8" fill="#c6c6c6"/><text transform="translate(6.9 231.31) rotate(-90)" font-size="3.6" text-anchor="middle" fill="#b8b8b8" font-family="Liberation Sans, sans-serif">7</text><rect x="1.6" y="231.01" width="1.0" height="0.6" fill="#a0a0a0"/><rect x="8.6" y="231.01" width="1.4" height="0.6" fill="#a0a0a0"/><rect x="4.4" y="239.51" width="2.4" height="0.8" fill="#c6c6c6"/><text transform="translate(6.9 248.50) rotate(-90)" font-size="3.6" text-anchor="middle" fill="#b8b8b8" font-family="Liberation Sans, sans-serif">8</text><rect x="1.6" y="248.20" width="1.0" height="0.6" fill="#a0a0a0"/><rect x="8.6" y="248.20" width="1.4" height="0.6" fill="#a0a0a0"/><rect x="4.4" y="256.70" width="2.4" height="0.8" fill="#c6c6c6"/><text transform="translate(6.9 265.69) rotate(-90)" font-size="3.6" text-anchor="middle" fill="#b8b8b8" font-family="Liberation Sans, sans-serif">9</text><rect x="1.6" y="265.39" width="1.0" height="0.6" fill="#a0a0a0"/><rect x="8.6" y="265.39" width="1.4" height="0.6" fill="#a0a0a0"/><rect x="4.4" y="273.89" width="2.4" height="0.8" fill="#c6c6c6"/><text transform="translate(6.9 282.88) rotate(-90)" font-size="3.6" text-anchor="middle" fill="#b8b8b8" font-family="Liberation Sans, sans-serif">10</text><rect x="1.6" y="282.58" width="1.0" height="0.6" fill="#a0a0a0"/><rect x="8.6" y="282.58" width="1.4" height="0.6" fill="#a0a0a0"/><rect x="4.4" y="291.08" width="2.4" height="0.8" fill="#c6c6c6"/><text transform="translate(6.9 300.07) rotate(-90)" font-size="3.6" text-anchor="middle" fill="#b8b8b8" font-family="Liberation Sans, sans-serif">11</text><rect x="1.6" y="299.77" width="1.0" height="0.6" fill="#a0a0a0"/><rect x="8.6" y="299.77" width="1.4" height="0.6" fill="#a0a0a0"/><rect x="4.4" y="308.27" width="2.4" height="0.8" fill="#c6c6c6"/><text transform="translate(6.9 317.26) rotate(-90)" font-size="3.6" text-anchor="middle" fill="#b8b8b8" font-family="Liberation Sans, sans-serif">12</text><rect x="1.6" y="316.96" width="1.0" height="0.6" fill="#a0a0a0"/><rect x="8.6" y="316.96" width="1.4" height="0.6" fill="#a0a0a0"/><rect x="4.4" y="325.46" width="2.4" height="0.8" fill="#c6c6c6"/><text transform="translate(6.9 334.45) rotate(-90)" font-size="3.6" text-anchor="middle" fill="#b8b8b8" font-family="Liberation Sans, sans-serif">13</text><rect x="1.6" y="334.15" width="1.0" height="0.6" fill="#a0a0a0"/><rect x="8.6" y="334.15" width="1.4" height="0.6" fill="#a0a0a0"/><rect x="4.4" y="342.65" width="2.4" height="0.8" fill="#c6c6c6"/><text transform="translate(6.9 351.64) rotate(-90)" font-size="3.6" text-anchor="middle" fill="#b8b8b8" font-family="Liberation Sans, sans-serif">14</text><rect x="1.6" y="351.34" width="1.0" height="0.6" fill="#a0a0a0"/><rect x="8.6" y="351.34" width="1.4" height="0.6" fill="#a0a0a0"/><rect x="4.4" y="359.84" width="2.4" height="0.8" fill="#c6c6c6"/><text transform="translate(6.9 368.83) rotate(-90)" font-size="3.6" text-anchor="middle" fill="#b8b8b8" font-family="Liberation Sans, sans-serif">15</text><rect x="1.6" y="368.53" width="1.0" height="0.6" fill="#a0a0a0"/><rect x="8.6" y="368.53" width="1.4" height="0.6" fill="#a0a0a0"/><rect x="4.4" y="377.03" width="2.4" height="0.8" fill="#c6c6c6"/><text transform="translate(6.9 386.02) rotate(-90)" font-size="3.6" text-anchor="middle" fill="#b8b8b8" font-family="Liberation Sans, sans-serif">16</text><rect x="1.6" y="385.72" width="1.0" height="0.6" fill="#a0a0a0"/><rect x="8.6" y="385.72" width="1.4" height="0.6" fill="#a0a0a0"/><rect x="4.4" y="394.22" width="2.4" height="0.8" fill="#c6c6c6"/><text transform="translate(6.9 403.21) rotate(-90)" font-size="3.6" text-anchor="middle" fill="#b8b8b8" font-family="Liberation Sans, sans-serif">17</text><rect x="1.6" y="402.91" width="1.0" height="0.6" fill="#a0a0a0"/><rect x="8.6" y="402.91" width="1.4" height="0.6" fill="#a0a0a0"/><rect x="4.4" y="411.41" width="2.4" height="0.8" fill="#c6c6c6"/><text transform="translate(6.9 420.40) rotate(-90)" font-size="3.6" text-anchor="middle" fill="#b8b8b8" font-family="Liberation Sans, sans-serif">18</text><rect x="1.6" y="420.10" width="1.0" height="0.6" fill="#a0a0a0"/><rect x="8.6" y="420.10" width="1.4" height="0.6" fill="#a0a0a0"/><rect x="4.4" y="428.60" width="2.4" height="0.8" fill="#c6c6c6"/><text transform="translate(6.9 437.59) rotate(-90)" font-size="3.6" text-anchor="middle" fill="#b8b8b8" font-family="Liberation Sans, sans-serif">19</text><rect x="1.6" y="437.29" width="1.0" height="0.6" fill="#a0a0a0"/><rect x="8.6" y="437.29" width="1.4" height="0.6" fill="#a0a0a0"/><rect x="4.4" y="445.79" width="2.4" height="0.8" fill="#c6c6c6"/><text transform="translate(6.9 454.78) rotate(-90)" font-size="3.6" text-anchor="middle" fill="#b8b8b8" font-family="Liberation Sans, sans-serif">20</text><rect x="1.6" y="454.48" width="1.0" height="0.6" fill="#a0a0a0"/><rect x="8.6" y="454.48" width="1.4" height="0.6" fill="#a0a0a0"/><rect x="4.4" y="462.98" width="2.4" height="0.8" fill="#c6c6c6"/><text transform="translate(6.9 471.97) rotate(-90)" font-size="3.6" text-anchor="middle" fill="#b8b8b8" font-family="Liberation Sans, sans-serif">21</text><rect x="1.6" y="471.67" width="1.0" height="0.6" fill="#a0a0a0"/><rect x="8.6" y="471.67" width="1.4" height="0.6" fill="#a0a0a0"/></svg>
<div class="a" style="left:255.60px;top:75.90px;width:361.40px;height:405.40px;background:#ffffff;"></div>
<div class="a" style="left:284.60px;top:110.00px;width:6.20px;height:0.60px;background:#cdcdcd;"></div>
<div class="a" style="left:290.20px;top:104.70px;width:0.60px;height:5.90px;background:#cdcdcd;"></div>
<div class="a" style="left:582.20px;top:110.00px;width:5.80px;height:0.60px;background:#cdcdcd;"></div>
<div class="a" style="left:582.20px;top:104.70px;width:0.60px;height:5.90px;background:#cdcdcd;"></div>
<div class="a" style="left:862.00px;top:63.90px;width:5.10px;height:320.30px;background:#3a3a3a;"></div>
<div class="a" style="left:868.00px;top:55.60px;width:0.90px;height:425.80px;background:#8c8c8c;"></div>
<div class="a" style="left:868.90px;top:252.00px;width:3.10px;height:32.60px;background:#727272;"></div>
<svg class="a" style="left:869.30px;top:266.80px;" width="2.4" height="3.6" viewBox="0 0 2.4 3.6"><path d="M2.2 0.2V3.4L0.2 1.8Z" fill="#111"/></svg>
<div class="a" style="left:0.00px;top:481.00px;width:872.00px;height:10.00px;background:#191919;"></div>
<div class="a" style="left:0.00px;top:481.00px;width:872.00px;height:0.75px;background:#a4a4a4;"></div>
<svg class="a" style="left:4.10px;top:482.80px;" width="7.6" height="6.8" viewBox="0 0 7.6 6.8"><path d="M0.35 0.35H6.0L7.2 1.5V6.4H0.35Z" fill="none" stroke="#9a9a9a" stroke-width="0.7"/><path d="M1.6 0.4V2.2H5.2V0.4" fill="none" stroke="#9a9a9a" stroke-width="0.6"/><rect x="1.6" y="4.0" width="4.2" height="2.4" fill="#8a8a8a"/></svg>
<div class="a" style="left:13.50px;top:482.60px;width:0.70px;height:7.60px;background:#303030;"></div>
<span class="a t" style="left:18.60px;top:483.77px;font-size:5.89px;line-height:7.06px;color:#f2f2f2;font-family:'Liberation Sans',sans-serif;transform:scaleX(0.8528);transform-origin:0 50%;-webkit-text-stroke:0.12px #f2f2f2;">Side 1 af 1</span>
<div class="a" style="left:141.20px;top:482.60px;width:0.70px;height:7.60px;background:#303030;"></div>
<span class="a t" style="left:145.60px;top:483.77px;font-size:5.89px;line-height:7.06px;color:#f2f2f2;font-family:'Liberation Sans',sans-serif;transform:scaleX(0.9319);transform-origin:0 50%;-webkit-text-stroke:0.12px #f2f2f2;">0 ord, 0 tegn</span>
<div class="a" style="left:274.20px;top:482.60px;width:0.70px;height:7.60px;background:#303030;"></div>
<div class="a" style="left:294.50px;top:482.60px;width:0.70px;height:7.60px;background:#303030;"></div>
<span class="a t" style="left:299.50px;top:483.77px;font-size:5.89px;line-height:7.06px;color:#f2f2f2;font-family:'Liberation Sans',sans-serif;transform:scaleX(0.9439);transform-origin:0 50%;-webkit-text-stroke:0.12px #f2f2f2;">Standard-sidetypografi</span>
<div class="a" style="left:452.90px;top:482.60px;width:0.70px;height:7.60px;background:#303030;"></div>
<span class="a t" style="left:505.50px;top:483.77px;font-size:5.89px;line-height:7.06px;color:#f2f2f2;font-family:'Liberation Sans',sans-serif;transform:scaleX(0.8931);transform-origin:0 50%;-webkit-text-stroke:0.12px #f2f2f2;">Dansk</span>
<div class="a" style="left:571.30px;top:482.60px;width:0.70px;height:7.60px;background:#303030;"></div>
<div class="a" style="left:602.20px;top:482.60px;width:0.70px;height:7.60px;background:#303030;"></div>
<div class="a" style="left:622.80px;top:482.60px;width:0.70px;height:7.60px;background:#303030;"></div>
<div class="a" style="left:636.60px;top:482.60px;width:0.70px;height:7.60px;background:#303030;"></div>
<div class="a" style="left:607.10px;top:484.20px;width:7.70px;height:4.20px;border:0.8px solid #2579c6;box-sizing:border-box;"></div>
<svg class="a" style="left:617.00px;top:482.80px;" width="2.8" height="7.0" viewBox="0 0 2.8 7.0"><path d="M0.2 0.3H2.6M0.2 6.7H2.6M1.4 0.3V6.7" stroke="#d8d8d8" stroke-width="0.6" fill="none"/></svg>
<div class="a" style="left:744.20px;top:482.60px;width:0.70px;height:7.60px;background:#303030;"></div>
<svg class="a" style="left:748.00px;top:483.30px;" width="5.6" height="6.6" viewBox="0 0 5.6 6.6"><path d="M0 0H3.8L5.4 1.6V6.4H0Z" fill="#69b1ec"/></svg>
<svg class="a" style="left:756.10px;top:483.30px;" width="11.6" height="6.6" viewBox="0 0 11.6 6.6"><path d="M0.35 0.35H3.6L5.0 1.8V6.2H0.35Z" fill="none" stroke="#c8c8c8" stroke-width="0.7"/><path d="M6.3 0.35H9.6L11.0 1.8V6.2H6.3Z" fill="none" stroke="#c8c8c8" stroke-width="0.7"/></svg>
<svg class="a" style="left:770.20px;top:483.30px;" width="11.4" height="6.6" viewBox="0 0 11.4 6.6"><path d="M0.35 1.8L1.8 0.35H5.4V6.2H0.35Z" fill="none" stroke="#c8c8c8" stroke-width="0.7"/><path d="M5.4 0.35H9.4L10.9 1.8V6.2H5.4Z" fill="none" stroke="#c8c8c8" stroke-width="0.7"/></svg>
<div class="a" style="left:783.90px;top:482.60px;width:0.70px;height:7.60px;background:#303030;"></div>
<div class="a" style="left:789.00px;top:486.05px;width:4.00px;height:0.75px;background:#e8e8e8;"></div>
<div class="a" style="left:795.90px;top:486.05px;width:44.00px;height:0.75px;background:#8e8e8e;"></div>
<div class="a" style="left:810.40px;top:485.40px;width:0.60px;height:1.20px;background:#8e8e8e;"></div>
<div class="a" style="left:816.20px;top:484.10px;width:1.40px;height:4.80px;background:#b4b4b4;"></div>
<div class="a" style="left:842.40px;top:486.05px;width:4.00px;height:0.75px;background:#e8e8e8;"></div>
<div class="a" style="left:844.05px;top:484.40px;width:0.75px;height:4.00px;background:#e8e8e8;"></div>
<div class="a" style="left:849.70px;top:482.60px;width:0.70px;height:7.60px;background:#303030;"></div>
<span class="a t" style="left:854.00px;top:483.90px;font-size:5.67px;line-height:6.80px;color:#f2f2f2;font-family:'Liberation Sans',sans-serif;transform:scaleX(0.8213);transform-origin:0 50%;-webkit-text-stroke:0.12px #f2f2f2;">100 %</span>
</body></html>
